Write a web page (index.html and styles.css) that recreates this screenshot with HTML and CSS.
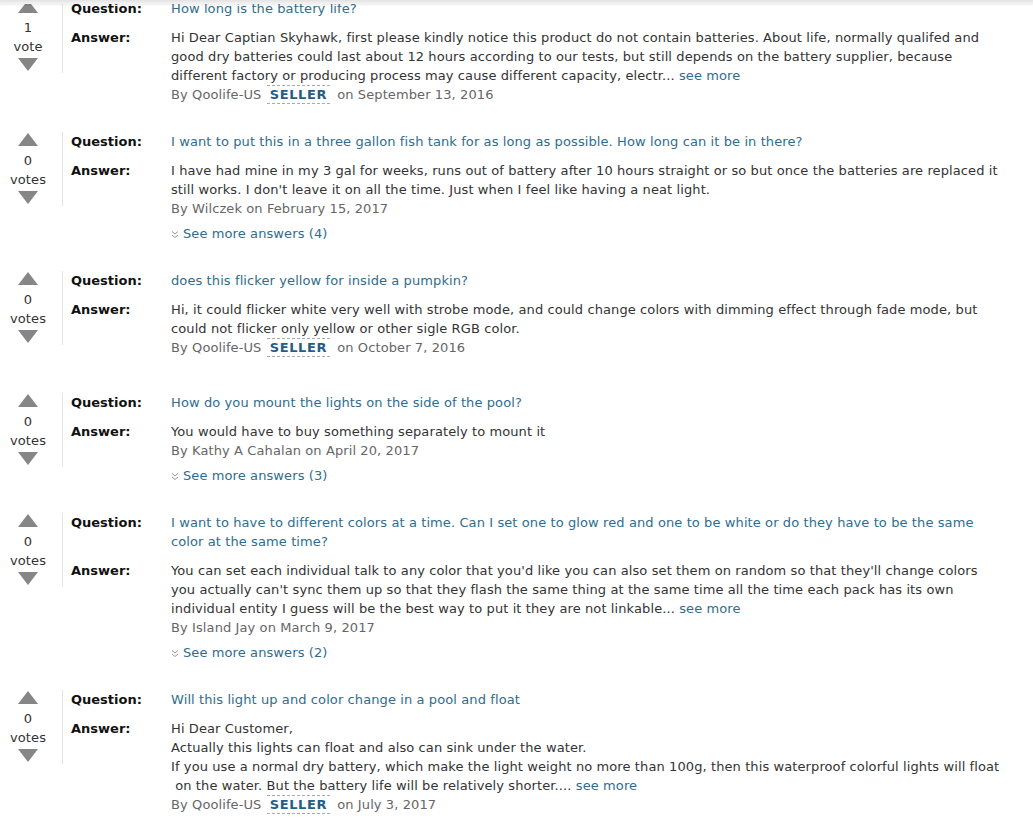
FILE: index.html
```html
<!DOCTYPE html>
<html lang="en">
<head>
  <meta charset="UTF-8">
  <title>Customer questions &amp; answers</title>
  <link rel="stylesheet" href="styles.css">
</head>
<body>
  <div class="top-shade"></div>

  <div class="qa-list">

    <div class="qa">
      <div class="vote">
        <span class="arrow up"></span>
        <span class="count">1</span>
        <span class="count">vote</span>
        <span class="arrow down"></span>
      </div>
      <div class="qa-body">
        <div class="label">Question:</div>
        <div class="question"><a href="#">How long is the battery life?</a></div>
        <div class="label">Answer:</div>
        <div class="answer">
          Hi Dear Captian Skyhawk, first please kindly notice this product do not contain batteries. About life, normally qualifed and good dry batteries could last about 12 hours according to our tests, but still depends on the battery supplier, because different factory or producing process may cause different capacity, electr... <a href="#">see more</a>
          <div class="byline">By Qoolife-US <span class="seller">SELLER</span> on September 13, 2016</div>
        </div>
      </div>
    </div>

    <div class="qa">
      <div class="vote">
        <span class="arrow up"></span>
        <span class="count">0</span>
        <span class="count">votes</span>
        <span class="arrow down"></span>
      </div>
      <div class="qa-body">
        <div class="label">Question:</div>
        <div class="question"><a href="#">I want to put this in a three gallon fish tank for as long as possible. How long can it be in there?</a></div>
        <div class="label">Answer:</div>
        <div class="answer">
          I have had mine in my 3 gal for weeks, runs out of battery after 10 hours straight or so but once the batteries are replaced it still works. I don't leave it on all the time. Just when I feel like having a neat light.
          <div class="byline">By Wilczek on February 15, 2017</div>
          <a class="more-answers" href="#"><svg width="8" height="9" viewBox="0 0 8 9"><path d="M1 1.5l3 2.5 3-2.5M1 5l3 2.5 3-2.5" fill="none" stroke="#999" stroke-width="1"/></svg>See more answers (4)</a>
        </div>
      </div>
    </div>

    <div class="qa qa-spaced">
      <div class="vote">
        <span class="arrow up"></span>
        <span class="count">0</span>
        <span class="count">votes</span>
        <span class="arrow down"></span>
      </div>
      <div class="qa-body">
        <div class="label">Question:</div>
        <div class="question"><a href="#">does this flicker yellow for inside a pumpkin?</a></div>
        <div class="label">Answer:</div>
        <div class="answer">
          Hi, it could flicker white very well with strobe mode, and could change colors with dimming effect through fade mode, but could not flicker only yellow or other sigle RGB color.
          <div class="byline">By Qoolife-US <span class="seller">SELLER</span> on October 7, 2016</div>
        </div>
      </div>
    </div>

    <div class="qa">
      <div class="vote">
        <span class="arrow up"></span>
        <span class="count">0</span>
        <span class="count">votes</span>
        <span class="arrow down"></span>
      </div>
      <div class="qa-body">
        <div class="label">Question:</div>
        <div class="question"><a href="#">How do you mount the lights on the side of the pool?</a></div>
        <div class="label">Answer:</div>
        <div class="answer">
          You would have to buy something separately to mount it
          <div class="byline">By Kathy A Cahalan on April 20, 2017</div>
          <a class="more-answers" href="#"><svg width="8" height="9" viewBox="0 0 8 9"><path d="M1 1.5l3 2.5 3-2.5M1 5l3 2.5 3-2.5" fill="none" stroke="#999" stroke-width="1"/></svg>See more answers (3)</a>
        </div>
      </div>
    </div>

    <div class="qa">
      <div class="vote">
        <span class="arrow up"></span>
        <span class="count">0</span>
        <span class="count">votes</span>
        <span class="arrow down"></span>
      </div>
      <div class="qa-body">
        <div class="label">Question:</div>
        <div class="question"><a href="#">I want to have to different colors at a time. Can I set one to glow red and one to be white or do they have to be the same color at the same time?</a></div>
        <div class="label">Answer:</div>
        <div class="answer">
          You can set each individual talk to any color that you'd like you can also set them on random so that they'll change colors you actually can't sync them up so that they flash the same thing at the same time all the time each pack has its own individual entity I guess will be the best way to put it they are not linkable... <a href="#">see more</a>
          <div class="byline">By Island Jay on March 9, 2017</div>
          <a class="more-answers" href="#"><svg width="8" height="9" viewBox="0 0 8 9"><path d="M1 1.5l3 2.5 3-2.5M1 5l3 2.5 3-2.5" fill="none" stroke="#999" stroke-width="1"/></svg>See more answers (2)</a>
        </div>
      </div>
    </div>

    <div class="qa">
      <div class="vote">
        <span class="arrow up"></span>
        <span class="count">0</span>
        <span class="count">votes</span>
        <span class="arrow down"></span>
      </div>
      <div class="qa-body">
        <div class="label">Question:</div>
        <div class="question"><a href="#">Will this light up and color change in a pool and float</a></div>
        <div class="label">Answer:</div>
        <div class="answer">
          Hi Dear Customer,<br>
          Actually this lights can float and also can sink under the water.<br>
          If you use a normal dry battery, which make the light weight no more than 100g, then this waterproof colorful lights will float<br>
          &nbsp;on the water. But the battery life will be relatively shorter.... <a href="#">see more</a>
          <div class="byline">By Qoolife-US <span class="seller">SELLER</span> on July 3, 2017</div>
        </div>
      </div>
    </div>

  </div>
</body>
</html>
```

FILE: styles.css
```css
body { margin: 0; background: #fff; font-family: "DejaVu Sans", Verdana, sans-serif; font-size: 13px; line-height: 19px; letter-spacing: 0.1px; color: #333; }
a { color: #2f6d8e; text-decoration: none; }

.top-shade { position: fixed; top: 0; left: 0; right: 0; height: 4px; background: linear-gradient(#e2e2e2, #f4f4f4); box-shadow: 0 1px 2px rgba(0, 0, 0, 0.08); }

.qa-list { width: 1000px; margin-top: -1px; }
.qa { display: flex; align-items: flex-start; margin-bottom: 28px; }
.qa-spaced { margin-bottom: 36px; }

.vote { width: 56px; padding: 1px 6px 0 0; margin-right: 8px; display: flex; flex-direction: column; align-items: center; border-right: 1px solid #e4e4e4; }
.vote .count { line-height: 19px; color: #333; }
.arrow { width: 0; height: 0; border-left: 10px solid transparent; border-right: 10px solid transparent; }
.arrow.up { border-bottom: 13px solid #868686; margin-bottom: 5px; }
.arrow.down { border-top: 13px solid #868686; margin-top: 2px; margin-bottom: 2px; }

.qa-body { flex: 1; display: grid; grid-template-columns: 100px 1fr; row-gap: 10px; }
.label { font-weight: bold; color: #111; letter-spacing: 0; }
.answer { color: #333; }

.byline { color: #666; }
.seller { display: inline-block; font-weight: bold; color: #265d85; letter-spacing: 0.6px; line-height: 17px; padding: 0 3px; margin: 0 3px 0 1px; border-top: 1px dashed #aaa; border-bottom: 1px dashed #aaa; }

.more-answers { display: inline-block; margin-top: 6px; }
.more-answers svg { margin-right: 4px; vertical-align: -1px; }
```
